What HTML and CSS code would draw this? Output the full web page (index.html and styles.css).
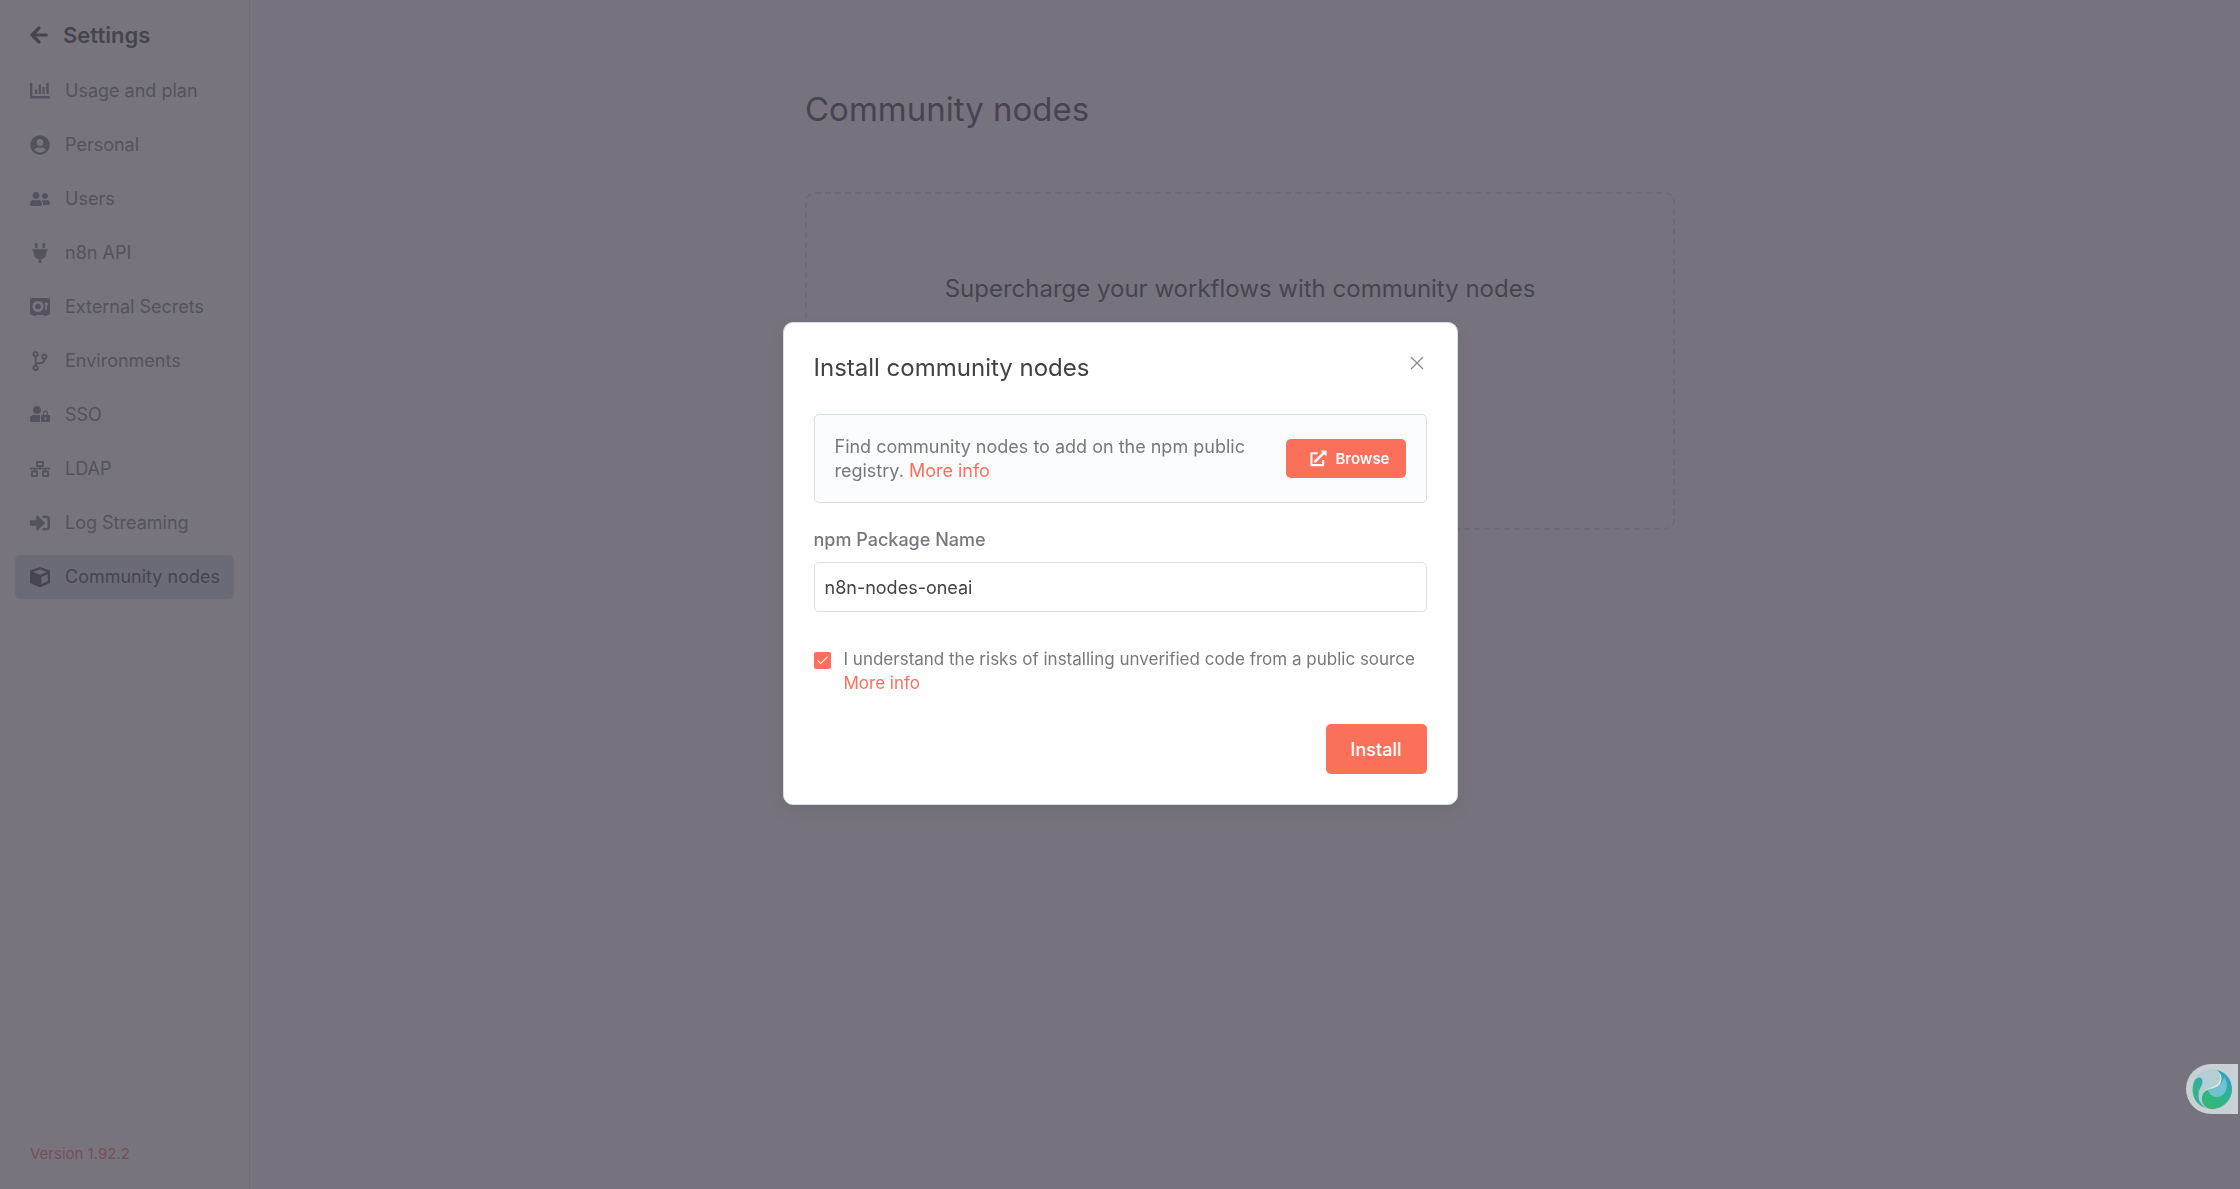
FILE: index.html
```html
<!DOCTYPE html>
<html lang="en">
<head>
    <meta charset="UTF-8">
    <meta name="viewport" content="width=device-width, initial-scale=1.0">
    <title>Community nodes - n8n</title>
    <link rel="stylesheet" href="styles.css">
</head>
<body>
    <div class="app">
        <aside class="sidebar">
            <a href="#" class="back">
                <svg class="back-icon" viewBox="0 0 18 18"><path d="M9 2 2 9l7 7M2.500 9H16.300" fill="none" stroke="currentColor" stroke-width="3.200" stroke-linecap="round" stroke-linejoin="round"/></svg>
                <span>Settings</span>
            </a>

            <nav class="menu">
                <a href="#" class="menu-item">
                    <svg class="icon" viewBox="0 0 20 20"><path d="M1.200 2V16.300H20" fill="none" stroke="currentColor" stroke-width="2.400"/><path d="M5 8.500h2.200V13H5zM8.800 3.500H11V13H8.800zM12.500 6h2.200v7h-2.200zM16.300 2h2.400v11h-2.400z" fill="currentColor"/></svg>
                    <span>Usage and plan</span>
                </a>
                <a href="#" class="menu-item">
                    <svg class="icon" viewBox="0 0 496 512"><path fill="currentColor" d="M248 8C111 8 0 119 0 256s111 248 248 248 248-111 248-248S385 8 248 8zm0 96c48.600 0 88 39.400 88 88s-39.400 88-88 88-88-39.400-88-88 39.400-88 88-88zm0 344c-58.700 0-111.300-26.600-146.500-68.200 18.800-35.400 55.600-59.800 98.500-59.800 2.400 0 4.800.4 7.100 1.100 13 4.200 26.600 6.900 40.900 6.900 14.300 0 28-2.700 40.900-6.900 2.300-.7 4.700-1.100 7.100-1.100 42.900 0 79.700 24.400 98.500 59.800C359.300 421.400 306.700 448 248 448z"/></svg>
                    <span>Personal</span>
                </a>
                <a href="#" class="menu-item">
                    <svg class="icon" viewBox="0 0 640 512"><path fill="currentColor" d="M192 256c61.900 0 112-50.100 112-112S253.900 32 192 32 80 82.100 80 144s50.100 112 112 112zm76.800 32h-8.300c-20.800 10-43.900 16-68.500 16s-47.600-6-68.500-16h-8.300C51.600 288 0 339.600 0 403.200V432c0 26.500 21.500 48 48 48h288c26.500 0 48-21.500 48-48v-28.800c0-63.600-51.600-115.200-115.200-115.200zM480 256c53 0 96-43 96-96s-43-96-96-96-96 43-96 96 43 96 96 96zm48 32h-3.800c-13.900 4.800-28.600 8-44.200 8s-30.300-3.200-44.200-8H432c-20.400 0-39.200 5.900-55.700 15.400 24.400 26.300 39.700 61.200 39.700 99.800v38.400c0 2.200-.5 4.300-.6 6.400H592c26.500 0 48-21.500 48-48 0-61.900-50.100-112-112-112z"/></svg>
                    <span>Users</span>
                </a>
                <a href="#" class="menu-item">
                    <svg class="icon" viewBox="0 0 384 512"><path fill="currentColor" d="M320 32a32 32 0 0 0-64 0v96h64zm48 128H16A16 16 0 0 0 0 176v32a16 16 0 0 0 16 16h16v32a160.100 160.100 0 0 0 128 156.800V512h64v-99.200A160.100 160.100 0 0 0 352 256v-32h16a16 16 0 0 0 16-16v-32a16 16 0 0 0-16-16zM128 32a32 32 0 0 0-64 0v96h64z"/></svg>
                    <span>n8n API</span>
                </a>
                <a href="#" class="menu-item">
                    <svg class="icon" viewBox="0 0 20 20"><path fill="currentColor" fill-rule="evenodd" d="M2 1h16a2 2 0 0 1 2 2v13a2 2 0 0 1-2 2h-.5l-.5 1h-2.500L14 18H6l-.5 1H3l-.5-1H2a2 2 0 0 1-2-2V3a2 2 0 0 1 2-2zM8 4a5.500 5.500 0 1 0 0 11A5.500 5.500 0 0 0 8 4zM16.200 5.500a1.700 1.700 0 0 0-.8 3.200V13H17V8.700a1.700 1.700 0 0 0-.8-3.200z"/><circle cx="8" cy="9.500" r="2.800" fill="currentColor"/></svg>
                    <span>External Secrets</span>
                </a>
                <a href="#" class="menu-item">
                    <svg class="icon" viewBox="0 0 384 512"><path fill="currentColor" d="M384 144c0-44.200-35.800-80-80-80s-80 35.800-80 80c0 36.400 24.300 67.100 57.500 76.800-.6 16.100-4.200 28.500-11 36.900-15.400 19.200-49.300 22.400-85.200 25.700-28.200 2.600-57.400 5.400-81.300 16.900v-144c32.500-10.200 56-40.500 56-76.300 0-44.200-35.800-80-80-80S0 35.800 0 80c0 35.800 23.500 66.100 56 76.300v199.300C23.500 365.900 0 396.200 0 432c0 44.200 35.800 80 80 80s80-35.800 80-80c0-34-21.200-63.100-51.200-74.600 3.100-5.200 7.800-9.800 14.900-13.400 16.200-8.200 40.400-10.400 66.100-12.800 42.200-3.900 90-8.400 118.200-43.400 14-17.400 21.100-39.800 21.600-67.900 31.600-10.800 54.400-40.700 54.400-75.900zM80 52c15.500 0 28 12.500 28 28s-12.500 28-28 28-28-12.500-28-28 12.500-28 28-28zm0 408c-15.500 0-28-12.500-28-28s12.500-28 28-28 28 12.500 28 28-12.500 28-28 28zM304 116c15.500 0 28 12.500 28 28s-12.500 28-28 28-28-12.500-28-28 12.500-28 28-28z"/></svg>
                    <span>Environments</span>
                </a>
                <a href="#" class="menu-item">
                    <svg class="icon" viewBox="0 0 20 20"><path fill="currentColor" fill-rule="evenodd" d="M7 1a4 4 0 1 1 0 8 4 4 0 0 1 0-8zM4 10h6v7H1.500A1.500 1.500 0 0 1 0 15.500V14a4 4 0 0 1 4-4zM12 10h1V8a2.500 2.500 0 0 1 5 0v2h1a1 1 0 0 1 1 1v5a1 1 0 0 1-1 1h-7a1 1 0 0 1-1-1v-5a1 1 0 0 1 1-1zM14.300 10h2.400V8a1.200 1.200 0 0 0-2.400 0zM15.500 12.300a1.200 1.200 0 1 0 0 2.400 1.200 1.200 0 0 0 0-2.400z"/></svg>
                    <span>SSO</span>
                </a>
                <a href="#" class="menu-item">
                    <svg class="icon" viewBox="0 0 20 20"><path d="M7 3h6v4H7zM2 12.500h5V17H2zM13 12.500h5V17h-5z" fill="none" stroke="currentColor" stroke-width="2" stroke-linejoin="round"/><path d="M0 9.500h20M10 7v2.500M4.500 9.500v3M15.500 9.500v3" fill="none" stroke="currentColor" stroke-width="1.500"/></svg>
                    <span>LDAP</span>
                </a>
                <a href="#" class="menu-item">
                    <svg class="icon" viewBox="0 0 512 512"><path fill="currentColor" d="M416 448h-84c-6.600 0-12-5.400-12-12v-40c0-6.600 5.400-12 12-12h84c17.700 0 32-14.300 32-32V160c0-17.700-14.300-32-32-32h-84c-6.600 0-12-5.400-12-12V76c0-6.600 5.400-12 12-12h84c53 0 96 43 96 96v192c0 53-43 96-96 96zm-47-209L201 71c-15-15-41-4.500-41 17v96H24c-13.300 0-24 10.700-24 24v96c0 13.300 10.700 24 24 24h136v96c0 21.500 26 32 41 17l168-168c9.300-9.400 9.300-24.600 0-34z"/></svg>
                    <span>Log Streaming</span>
                </a>
                <a href="#" class="menu-item active">
                    <svg class="icon" viewBox="0 0 20 20"><path fill="currentColor" fill-rule="evenodd" d="M10 0l9 3.300a1.500 1.500 0 0 1 1 1.400v10.400a1.500 1.500 0 0 1-.9 1.400L10.500 20h-1L.9 16.500a1.500 1.500 0 0 1-.9-1.400V4.700a1.500 1.500 0 0 1 1-1.400zM10 2.300 3 4.900l7 2.900 7-2.900zM17.700 7.300l-6.400 2.700v7l6.400-2.700z"/></svg>
                    <span>Community nodes</span>
                </a>
            </nav>

            <a href="#" class="version">Version 1.92.2</a>
        </aside>

        <main class="main">
            <div class="content">
                <h1>Community nodes</h1>
                <section class="empty-box">
                    <h2>Supercharge your workflows with community nodes</h2>
                </section>
            </div>
        </main>
    </div>

    <div class="overlay">
        <div class="modal" role="dialog" aria-labelledby="modal-title">
            <header class="modal-header">
                <h2 id="modal-title">Install community nodes</h2>
                <button type="button" class="close" aria-label="Close">
                    <svg viewBox="0 0 14 14"><path d="M1 1l12 12M13 1L1 13" fill="none" stroke="currentColor" stroke-width="1.200"/></svg>
                </button>
            </header>

            <form class="install-form" id="install-form">
                <div class="notice">
                    <p>Find community nodes to add on the npm public registry. <a href="#">More info</a></p>
                    <button type="button" class="btn btn-small">
                        <svg viewBox="0 0 18 18"><path d="M8 3.500H1.500V16H14V10.500" fill="none" stroke="currentColor" stroke-width="2.200" stroke-linejoin="round"/><path d="M5.500 12 15 2.700" stroke="currentColor" stroke-width="2.600" stroke-linecap="round"/><path d="M11 .5h6.500V7z" fill="currentColor"/></svg>
                        Browse
                    </button>
                </div>

                <label class="field-label" for="package_name">npm Package Name</label>
                <input type="text" class="text-input" id="package_name" value="n8n-nodes-oneai">

                <div class="agree">
                    <input type="checkbox" id="agree_risks" checked>
                    <div class="agree-text">
                        <label for="agree_risks">I understand the risks of installing unverified code from a public source</label>
                        <a href="#">More info</a>
                    </div>
                </div>

                <div class="modal-footer">
                    <button type="submit" class="btn">Install</button>
                </div>
            </form>
        </div>
    </div>

    <button type="button" class="assistant" aria-label="Open assistant">
        <svg viewBox="0 0 40 40">
            <defs>
                <linearGradient id="swirl" x1="1" y1="0" x2="0" y2="1">
                    <stop offset="0" stop-color="#2f9bdb"/>
                    <stop offset="0.500" stop-color="#30b58c"/>
                    <stop offset="1" stop-color="#35b86b"/>
                </linearGradient>
            </defs>
            <circle cx="20" cy="20" r="20" fill="#b3cfd3"/>
            <path d="M2 13C4 7 11 7 10.500 13C10 18 5 22 6 29C7 34 10 37 14 39C3 36-2 24 2 13z" fill="url(#swirl)"/>
            <path d="M14 39C5 35 3 28 8 21C4 29 9 36 14 39z" fill="#3fa4df"/>
            <path d="M25 1C34 3 40 11 40 20C40 31 31 40 20 40C13 40 9 34 10 28C11 22 16 20 21 20C28 19 33 10 25 1z" fill="url(#swirl)"/>
            <path d="M16 21C21 20 31 16 32 8C38 16 34 28 25 28C20 28 17 25 16 21z" fill="#6fc3cb"/>
            <path d="M24 1C30 4 32 12 26 17C21 20 15 19 11 24C16 17 25 19 28 11C29 7 27 3 24 1z" fill="#dce3e6"/>
        </svg>
    </button>

    <script>
        document.getElementById('install-form').addEventListener('submit', function(e) {
            e.preventDefault();
        });
    </script>
</body>
</html>
```

FILE: styles.css
```css
* {
    box-sizing: border-box;
}
body {
    margin: 0;
    font-family: Inter, sans-serif;
    font-size: 18px;
    line-height: 24px;
    color: #75787f;
    background-color: #fbfcfe;
}
h1, h2, p {
    margin: 0;
    font-weight: 400;
}
a {
    color: #fb705b;
    text-decoration: none;
}
button, input {
    font-family: inherit;
    font-size: inherit;
}
.app {
    display: flex;
    min-height: 100vh;
}

/* sidebar */
.sidebar {
    display: flex;
    flex-direction: column;
    width: 250px;
    padding: 20px 15px 23px;
    background-color: #fff;
    border-right: 1px solid #d9dee8;
}
.back {
    display: flex;
    align-items: center;
    gap: 15px;
    height: 30px;
    padding-left: 15px;
    font-size: 22px;
    font-weight: 600;
    color: #414244;
}
.back-icon {
    width: 18px;
    height: 18px;
}
.menu {
    display: flex;
    flex-direction: column;
    gap: 10px;
    margin-top: 19px;
}
.menu-item {
    display: flex;
    align-items: center;
    gap: 15px;
    height: 44px;
    padding: 0 15px;
    border-radius: 5px;
    color: #75787f;
    white-space: nowrap;
}
.menu-item.active {
    background-color: #d0dae8;
    color: #414244;
}
.icon {
    flex: none;
    width: 20px;
    height: 20px;
}
.version {
    margin-top: auto;
    padding-left: 15px;
    font-size: 15px;
}

/* page */
.main {
    flex: 1;
    padding: 84px 10px 0 0;
}
.content {
    max-width: 870px;
    margin: 0 auto;
}
h1 {
    font-size: 33px;
    line-height: 50px;
    color: #414244;
}
.empty-box {
    min-height: 338px;
    margin-top: 58px;
    padding-top: 80px;
    border: 2px dashed #d0dae8;
    border-radius: 10px;
    text-align: center;
}
h2 {
    font-size: 24px;
    line-height: 30px;
    color: #414244;
}

/* modal */
.overlay {
    position: fixed;
    inset: 0;
    padding-top: 322px;
    background-color: rgba(73, 69, 83, 0.75);
}
.modal {
    max-width: 675px;
    margin: 0 auto;
    padding: 30px;
    border: 1px solid #d9dee8;
    border-radius: 10px;
    background-color: #fff;
    box-shadow: 0 6px 16px rgba(68, 28, 23, 0.1);
}
.modal-header {
    display: flex;
    justify-content: space-between;
    align-items: flex-start;
}
.close {
    display: flex;
    padding: 3px;
    border: none;
    background: none;
    color: #85878c;
    cursor: pointer;
}
.close svg {
    width: 14px;
    height: 14px;
}
.notice {
    display: flex;
    align-items: center;
    justify-content: space-between;
    gap: 40px;
    min-height: 89px;
    margin-top: 31px;
    padding: 19px 20px;
    border: 1px solid #d9dee8;
    border-radius: 5px;
    background-color: #fbfcfe;
}
.btn {
    height: 50px;
    padding: 0 25px;
    border: none;
    border-radius: 5px;
    background-color: #fb705b;
    color: #fff;
    font-weight: 500;
    cursor: pointer;
}
.btn-small {
    display: flex;
    align-items: center;
    gap: 8px;
    height: 39px;
    padding: 0 16px 0 24px;
    font-size: 15px;
    font-weight: 600;
}
.btn-small svg {
    width: 17px;
    height: 17px;
}
.field-label {
    display: block;
    margin-top: 25px;
    font-weight: 500;
}
.text-input {
    display: block;
    width: 100%;
    height: 50px;
    margin-top: 10px;
    padding: 0 10px;
    border: 1px solid #d9dee8;
    border-radius: 5px;
    color: #414244;
}
.agree {
    display: flex;
    gap: 13px;
    margin-top: 35px;
    overflow: hidden;
}
.agree input {
    flex: none;
    appearance: none;
    width: 17px;
    height: 17px;
    margin: 5px 0 0;
    border-radius: 2px;
    background-color: #fb705b;
}
.agree input:checked::before {
    content: "";
    display: block;
    width: 4px;
    height: 9px;
    margin: 2px 0 0 6px;
    border: solid #fff;
    border-width: 0 1px 1px 0;
    transform: rotate(45deg);
}
.agree-text {
    font-size: 17px;
    white-space: nowrap;
}
.agree-text label, .agree-text a {
    display: block;
}
.modal-footer {
    display: flex;
    justify-content: flex-end;
    margin-top: 29px;
}

/* assistant tab at the window edge */
.assistant {
    position: fixed;
    right: 2px;
    bottom: 75px;
    width: 52px;
    height: 50px;
    padding: 5px 6px;
    border: none;
    border-radius: 25px 0 0 25px;
    background-color: #c9d1d4;
    cursor: pointer;
}
.assistant svg {
    display: block;
    width: 40px;
    height: 40px;
}
```
